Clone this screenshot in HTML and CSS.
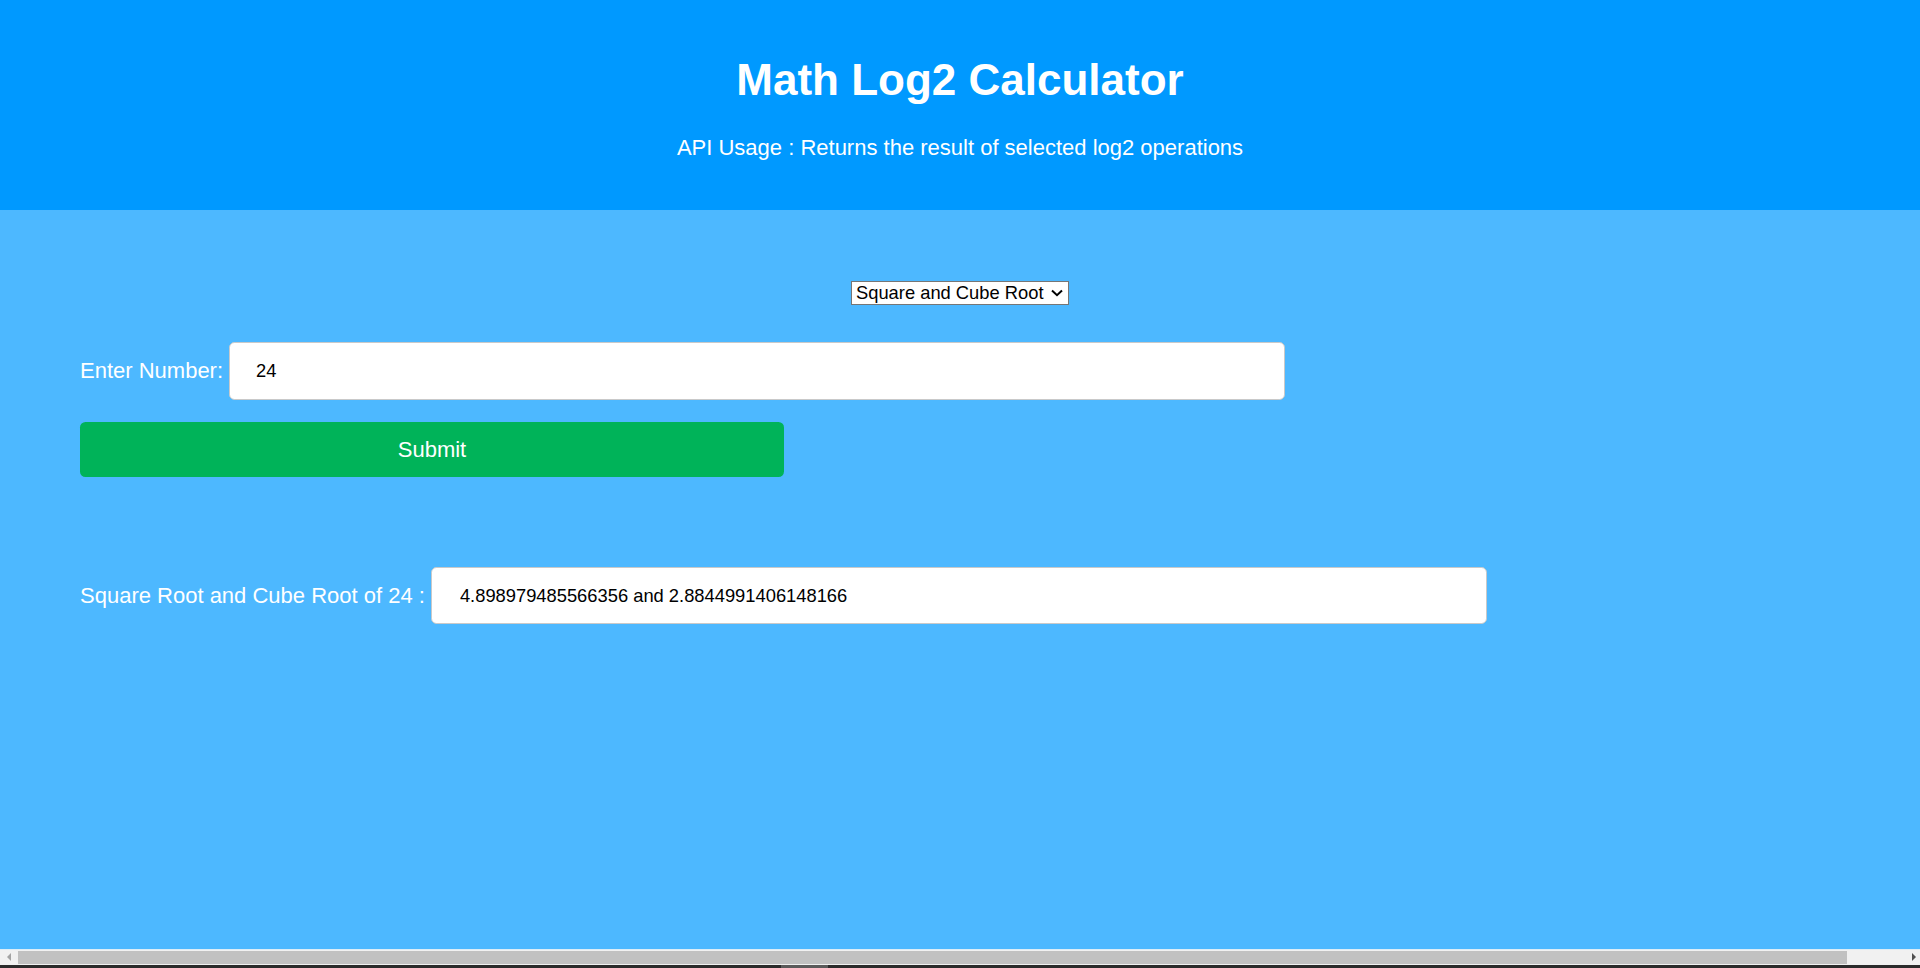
FILE: index.html
```html
<!DOCTYPE html>
<html lang="en">
<head>
<meta charset="utf-8">
<title>Math Log2 Calculator</title>
<link rel="stylesheet" href="styles.css">
</head>
<body>
<header class="header">
  <h1 class="title">Math Log2 Calculator</h1>
  <p class="subtitle">API Usage : Returns the result of selected log2 operations</p>
</header>
<main class="main">
  <div class="select-row">
    <div class="select-wrap">
      <select class="op-select">
        <option>Square and Cube Root</option>
      </select>
      <svg class="chevron" width="12" height="8" viewBox="0 0 12 8"><polyline points="1,1.5 6,6.2 11,1.5" fill="none" stroke="#000" stroke-width="2"/></svg>
    </div>
  </div>
  <div class="form-row">
    <label class="label" for="num">Enter Number:</label>
    <input id="num" class="field field-input" type="text" value="24">
  </div>
  <button class="submit" type="button">Submit</button>
  <div class="result-row">
    <span class="label">Square Root and Cube Root of 24 :</span>
    <input class="field field-result" type="text" readonly value="4.898979485566356 and 2.8844991406148166">
  </div>
</main>
<div class="hscroll">
  <div class="hscroll-line"></div>
  <div class="hscroll-track">
    <div class="arrow arrow-left"></div>
    <div class="thumb"></div>
    <div class="arrow arrow-right"></div>
  </div>
  <div class="taskbar"><div class="taskbar-mark"></div></div>
</div>
</body>
</html>
```
FILE: styles.css
```css
html, body {
  margin: 0;
  padding: 0;
}
body {
  height: 968px;
  overflow: hidden;
  display: flex;
  flex-direction: column;
  font-family: "Liberation Sans", Arial, sans-serif;
  background: #4db8ff;
}
.header {
  height: 210px;
  flex: none;
  background: #0099ff;
  color: #fff;
  text-align: center;
  padding-top: 54px;
  box-sizing: border-box;
}
.title {
  margin: 0;
  font-size: 44px;
  font-weight: bold;
  line-height: 51px;
}
.subtitle {
  margin: 30px 0 0;
  font-size: 22px;
  line-height: 25px;
}
.main {
  flex: 1;
  padding: 71px 80px 0 80px;
  color: #fff;
  font-size: 22px;
}
.select-row {
  display: flex;
  justify-content: center;
}
.select-wrap {
  position: relative;
  display: flex;
}
.op-select {
  appearance: none;
  -webkit-appearance: none;
  width: 218px;
  height: 24px;
  margin: 0;
  padding: 0 0 0 4px;
  border: 1px solid #767676;
  border-radius: 0;
  background: #fff;
  color: #000;
  font-family: "Liberation Sans", Arial, sans-serif;
  font-size: 18.33px;
  line-height: 22px;
}
.chevron {
  position: absolute;
  right: 6px;
  top: 8px;
  pointer-events: none;
}
.form-row {
  display: flex;
  align-items: center;
  gap: 6px;
  margin-top: 37px;
}
.label {
  font-size: 22px;
  color: #fff;
  white-space: nowrap;
}
.field {
  box-sizing: border-box;
  width: 1056px;
  margin: 0;
  border: 1px solid #c9c9c9;
  border-radius: 5.5px;
  background: #fff;
  color: #000;
  font-family: "Liberation Sans", Arial, sans-serif;
  font-size: 18.33px;
  outline: none;
}
.field-input {
  height: 58px;
  padding: 0 0 0 26px;
}
.submit {
  display: block;
  width: 704px;
  height: 55px;
  margin-top: 22px;
  border: none;
  border-radius: 5.5px;
  background: #00b359;
  color: #fff;
  font-family: "Liberation Sans", Arial, sans-serif;
  font-size: 22px;
  padding: 0;
}
.result-row {
  display: flex;
  align-items: center;
  gap: 6px;
  margin-top: 90px;
}
.field-result {
  height: 57px;
  padding: 0 0 0 28px;
}
.hscroll {
  flex: none;
  display: flex;
  flex-direction: column;
}
.hscroll-line {
  height: 1px;
  background: #dcedf7;
}
.hscroll-track {
  height: 15px;
  background: #f1f1f1;
  display: flex;
  align-items: center;
}
.arrow {
  width: 17px;
  height: 15px;
  flex: none;
  position: relative;
}
.arrow-left::after {
  content: "";
  position: absolute;
  left: 7px;
  top: 3px;
  border-top: 4.5px solid transparent;
  border-bottom: 4.5px solid transparent;
  border-right: 4px solid #a3a3a3;
}
.arrow-right::after {
  content: "";
  position: absolute;
  left: 9px;
  top: 3px;
  border-top: 4.5px solid transparent;
  border-bottom: 4.5px solid transparent;
  border-left: 4px solid #505050;
}
.thumb {
  width: 1829px;
  height: 13px;
  background: #c1c1c1;
  margin-left: 1px;
}
.hscroll-track .arrow-right {
  margin-left: auto;
}
.taskbar {
  height: 3px;
  background: #2b2b2b;
  position: relative;
}
.taskbar-mark {
  margin-left: 781px;
  width: 47px;
  height: 3px;
  background: #5a5a5a;
}
```
